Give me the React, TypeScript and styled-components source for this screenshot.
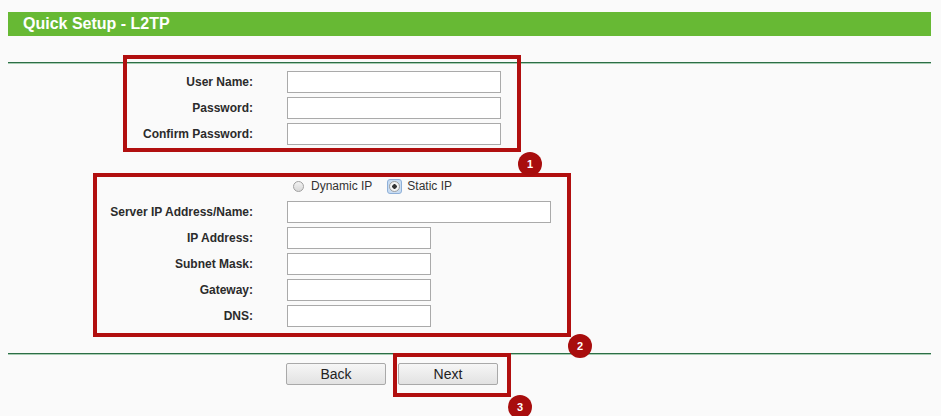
import styled, { createGlobalStyle } from "styled-components";

const GlobalStyle = createGlobalStyle`
  html, body {
    margin: 0;
    background: #fafafa;
    font-family: Arial, "Liberation Sans", sans-serif;
  }
`;

const Page = styled.div`
  position: relative;
  width: 923px;
  padding: 12px 10px 0 8px;
  height: 404px;
`;

const TitleBar = styled.div`
  height: 24px;
  background: #67b934;
  color: #fff;
  font-size: 16px;
  font-weight: bold;
  line-height: 24px;
  padding-left: 15px;
`;

const Divider = styled.div<{ $top: number }>`
  margin-top: ${(p) => p.$top}px;
  height: 1px;
  border-top: 1px solid #2c6e46;
  background: #a9cdb4;
`;

const Form = styled.div<{ $top: number }>`
  display: flex;
  flex-direction: column;
  gap: 4px;
  margin-top: ${(p) => p.$top}px;
`;

const Row = styled.div`
  display: flex;
  align-items: center;
  height: 22px;
`;

const Label = styled.label`
  width: 245px;
  padding-right: 34px;
  text-align: right;
  font-size: 12px;
  font-weight: bold;
  color: #2b2b2b;
`;

const TextInput = styled.input<{ $w: number }>`
  box-sizing: border-box;
  width: ${(p) => p.$w}px;
  height: 22px;
  margin: 0;
  border: 1px solid #aaa;
  background: #fff;
  outline: none;
`;

const RadioGroup = styled.div`
  display: flex;
  align-items: center;
  margin-left: 280px;
  margin-top: 30px;
  height: 22px;
  font-size: 12px;
  color: #333;
`;

const RadioItem = styled.span`
  display: flex;
  align-items: center;
  margin-right: 12px;
`;

const RadioDot = styled.span<{ $on?: boolean }>`
  box-sizing: border-box;
  display: inline-flex;
  align-items: center;
  justify-content: center;
  width: 15px;
  height: 15px;
  margin: 0 5px 0 3px;
  border-radius: 3px;
  background: ${(p) => (p.$on ? "#c8dcf2" : "transparent")};
  border: 1px solid ${(p) => (p.$on ? "#8fb0d8" : "transparent")};

  &::before {
    content: "";
    box-sizing: border-box;
    width: 11px;
    height: 11px;
    border-radius: 50%;
    border: 1px solid #a0a0a0;
    background: ${(p) =>
      p.$on
        ? "radial-gradient(circle, #333 0 2px, #f4f4f4 2.5px)"
        : "linear-gradient(#f2f2f2, #d8d8d8)"};
  }
`;

const Buttons = styled.div`
  display: flex;
  gap: 12px;
  margin: 8px 0 0 278px;
`;

const Button = styled.button`
  box-sizing: border-box;
  width: 100px;
  height: 22px;
  padding: 0;
  border: 1px solid #a9a9a9;
  border-radius: 2px;
  background: linear-gradient(#f6f6f6, #e2e2e2);
  font-family: Arial, "Liberation Sans", sans-serif;
  font-size: 14px;
  color: #222;
`;

const Mark = styled.div<{ $x: number; $y: number; $w: number; $h: number }>`
  position: absolute;
  box-sizing: border-box;
  left: ${(p) => p.$x}px;
  top: ${(p) => p.$y}px;
  width: ${(p) => p.$w}px;
  height: ${(p) => p.$h}px;
  border: 4px solid #b10f0f;
  pointer-events: none;
`;

const Badge = styled.div<{ $x: number; $y: number }>`
  position: absolute;
  left: ${(p) => p.$x}px;
  top: ${(p) => p.$y}px;
  width: 24px;
  height: 24px;
  border-radius: 50%;
  background: #a80d0d;
  color: #fff;
  font-size: 11px;
  font-weight: bold;
  line-height: 24px;
  text-align: center;
`;

const account = [
  { label: "User Name:", w: 214 },
  { label: "Password:", w: 214 },
  { label: "Confirm Password:", w: 214 },
];

const network = [
  { label: "Server IP Address/Name:", w: 264 },
  { label: "IP Address:", w: 144 },
  { label: "Subnet Mask:", w: 144 },
  { label: "Gateway:", w: 144 },
  { label: "DNS:", w: 144 },
];

const App = () => {
  return (
    <Page>
      <GlobalStyle />
      <TitleBar>Quick Setup - L2TP</TitleBar>
      <Divider $top={26} />
      <Form $top={7}>
        {account.map((f) => (
          <Row key={f.label}>
            <Label>{f.label}</Label>
            <TextInput $w={f.w} type="text" />
          </Row>
        ))}
      </Form>
      <RadioGroup>
        <RadioItem>
          <RadioDot />
          Dynamic IP
        </RadioItem>
        <RadioItem>
          <RadioDot $on />
          Static IP
        </RadioItem>
      </RadioGroup>
      <Form $top={4}>
        {network.map((f) => (
          <Row key={f.label}>
            <Label>{f.label}</Label>
            <TextInput $w={f.w} type="text" />
          </Row>
        ))}
      </Form>
      <Divider $top={26} />
      <Buttons>
        <Button>Back</Button>
        <Button>Next</Button>
      </Buttons>

      <Mark $x={123} $y={55} $w={398} $h={97} />
      <Mark $x={93} $y={173} $w={478} $h={164} />
      <Mark $x={393} $y={353} $w={118} $h={44} />
      <Badge $x={518} $y={152}>1</Badge>
      <Badge $x={568} $y={334}>2</Badge>
      <Badge $x={508} $y={395}>3</Badge>
    </Page>
  );
};

export default App;
